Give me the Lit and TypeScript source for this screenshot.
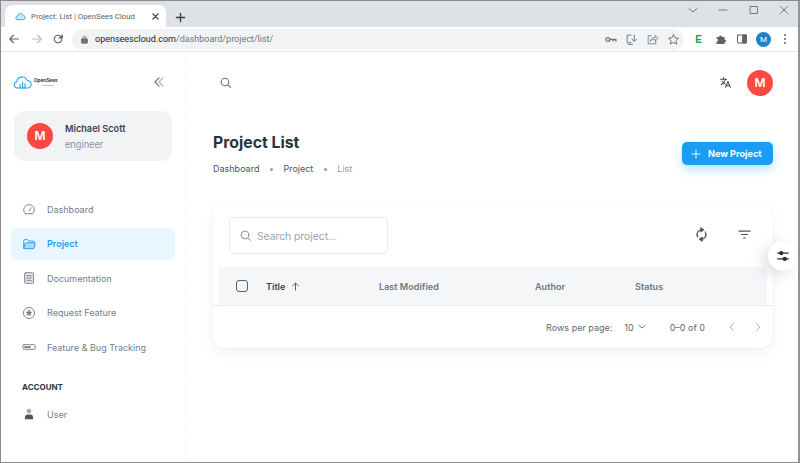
import { LitElement, css, html, svg } from "lit";
import { customElement } from "lit/decorators.js";

const icon = (size: number, body: unknown, sw = 2, view = 24) => html`<svg
  width=${size}
  height=${size}
  viewBox="0 0 ${view} ${view}"
  fill="none"
  stroke="currentColor"
  stroke-width=${sw}
  stroke-linecap="round"
  stroke-linejoin="round"
>${body}</svg>`;

const searchPath = svg`<circle cx="11" cy="11" r="7"></circle><path d="M16.500 16.500 21 21"></path>`;

const navItems = [
  {
    label: "Dashboard",
    icon: svg`<path d="M6 20h12c2-1 3-3.500 3-6.500C21 8 17 4.500 12 4.500S3 8 3 13.500C3 16.500 4 19 6 20Z"></path><path d="m12 15 4-5"></path>`,
  },
  {
    label: "Project",
    active: true,
    icon: svg`<path d="M3 19V6a1.500 1.500 0 0 1 1.500-1.500h5L12 7h7.500A1.500 1.500 0 0 1 21 8.500V10"></path><path d="M3 19a1.500 1.500 0 0 0 1.500 1H19a2 2 0 0 0 2-1.500l1.500-7a1 1 0 0 0-1-1.500H7a1.500 1.500 0 0 0-1.500 1.200L3 19Z" fill="currentColor" fill-opacity=".3"></path>`,
  },
  {
    label: "Documentation",
    icon: svg`<rect x="4.500" y="3" width="15" height="18" rx="1.500" fill="currentColor" fill-opacity=".18"></rect><path d="M8 8h8M8 12h8M8 16h8"></path>`,
  },
  {
    label: "Request Feature",
    icon: svg`<circle cx="12" cy="12" r="9.500"></circle><path d="m12 7 1.500 3.200 3.500.4-2.600 2.300.7 3.500L12 14.700l-3.100 1.700.7-3.500L7 10.600l3.500-.4L12 7Z" fill="currentColor" stroke-width="1"></path>`,
  },
  {
    label: "Feature & Bug Tracking",
    icon: svg`<rect x="1.500" y="8" width="21" height="8" rx="2"></rect><path d="M5 12h9" stroke-width="3"></path>`,
  },
];

@customElement("app-root")
export class AppRoot extends LitElement {
  static styles = css`
    :host {
      display: block;
      width: 800px;
      height: 463px;
      overflow: hidden;
      font-family: Inter, "Noto Sans", sans-serif;
      color: #212b36;
      background: #fff;
    }
    * {
      box-sizing: border-box;
    }
    svg {
      display: block;
      flex: none;
    }
    .window {
      position: relative;
      height: 463px;
      display: flex;
      flex-direction: column;
      border-left: 1px solid #8b8b8b;
      border-right: 2px solid #8f9499;
      border-bottom: 1px solid #8b8b8b;
      border-top: 1px solid #8b8b8b;
    }

    /* browser chrome */
    .tabstrip {
      height: 26px;
      flex: none;
      background: #dee1e6;
      display: flex;
      align-items: flex-end;
      padding-left: 4px;
      color: #3c4043;
    }
    .tab {
      width: 161px;
      height: 22px;
      background: #fff;
      border-radius: 7px 7px 0 0;
      display: flex;
      align-items: center;
      padding: 0 6px 0 10px;
      font: 7.800px Roboto, sans-serif;
      gap: 5px;
    }
    .tab .name {
      flex: 1;
      white-space: nowrap;
      color: #5a5f64;
    }
    .new-tab {
      margin: 7px 0 1px 9px;
      align-self: center;
    }
    .win-controls {
      margin-left: auto;
      align-self: flex-start;
      display: flex;
      align-items: center;
      gap: 18.500px;
      padding: 3px 8px 0 0;
      color: #50555a;
    }
    .toolbar {
      height: 25px;
      flex: none;
      display: flex;
      align-items: center;
      padding: 0 9px 0 7px;
      color: #5f6368;
      border-bottom: 1px solid #e4e6e8;
    }
    .nav-btns {
      display: flex;
      gap: 11px;
      margin-right: 8px;
    }
    .nav-btns .off {
      color: #b9bcc0;
    }
    .nav-btns .reload {
      margin-left: -2px;
    }
    .omnibox {
      width: 612px;
      height: 21px;
      border-radius: 11px;
      background: #f1f3f4;
      display: flex;
      align-items: center;
      padding: 0 4px 0 8px;
      font: 9px Roboto, sans-serif;
      color: #70757a;
    }
    .omnibox .host {
      color: #202124;
    }
    .omnibox .url {
      margin-left: 6px;
      flex: 1;
      white-space: nowrap;
    }
    .omni-icons {
      display: flex;
      gap: 8px;
    }
    .ext {
      display: flex;
      align-items: center;
      gap: 9px;
      margin-left: 8px;
    }
    .ext .e {
      width: 13px;
      text-align: center;
      font: bold 10px "Liberation Sans", sans-serif;
      color: #1c9a3e;
    }
    .ext .puzzle {
      margin-left: 1px;
    }
    .profile {
      width: 15px;
      height: 15px;
      border-radius: 50%;
      background: #1a84c9;
      color: #fff;
      font: 8px/15px Roboto, sans-serif;
      text-align: center;
      margin-left: -1px;
    }
    .dots {
      display: flex;
      flex-direction: column;
      gap: 2px;
      margin-left: 4px;
    }
    .dots i {
      width: 2px;
      height: 2px;
      border-radius: 50%;
      background: #5f6368;
    }

    /* page */
    .page {
      flex: 1;
      display: flex;
      min-height: 0;
    }
    .sidebar {
      width: 185px;
      flex: none;
      border-right: 1px dashed #f1f3f4;
      padding: 0 10px;
      display: flex;
      flex-direction: column;
    }
    .side-head {
      height: 59px;
      flex: none;
      display: flex;
      align-items: center;
      justify-content: space-between;
      padding: 1px 9px 0 2px;
      color: #637381;
    }
    .logo {
      display: flex;
      align-items: center;
      gap: 1px;
      margin-top: 2px;
      color: #2aa2e8;
    }
    .logo-text {
      width: 27px;
      margin-top: -2px;
    }
    .logo-text b {
      display: block;
      font: 600 5.200px/5px Roboto, sans-serif;
      color: #333;
      white-space: nowrap;
    }
    .logo-text i {
      display: block;
      width: 12px;
      height: 1px;
      margin: 2px auto 0;
      background: #c4c7ca;
    }
    .user-card {
      margin: 0 3px;
      height: 50px;
      border-radius: 10px;
      background: #f2f3f5;
      display: flex;
      align-items: center;
      padding-left: 13px;
      gap: 12px;
    }
    .avatar {
      width: 26px;
      height: 26px;
      border-radius: 50%;
      background: #ff4842;
      color: #fff;
      font-weight: 600;
      font-size: 12px;
      line-height: 26px;
      text-align: center;
      flex: none;
    }
    .user-text {
      padding-top: 1px;
    }
    .user-name {
      font-size: 9.200px;
      font-weight: 600;
      color: #3a4350;
      line-height: 13px;
    }
    .user-role {
      font-size: 9.200px;
      color: #8a94a0;
      margin-top: 3px;
      line-height: 13px;
    }
    nav {
      margin-top: 32px;
      display: flex;
      flex-direction: column;
      gap: 2.500px;
    }
    .nav-item {
      height: 32px;
      border-radius: 6px;
      display: flex;
      align-items: center;
      padding-left: 11px;
      gap: 11px;
      font-size: 9px;
      color: #737e8a;
    }
    .nav-item.active {
      background: #e9f6ff;
      color: #1f9bf0;
      font-weight: 600;
    }
    .section {
      margin: 18px 0 0 11px;
      font-size: 8px;
      font-weight: 700;
      color: #2d3743;
      line-height: 12px;
    }
    .nav-item.user {
      margin-top: 5px;
    }

    .main {
      flex: 1;
      min-width: 0;
      padding: 0 25px 0 27px;
      display: flex;
      flex-direction: column;
    }
    .topbar {
      height: 61px;
      flex: none;
      display: flex;
      align-items: center;
      justify-content: space-between;
      padding: 0 0 0 6px;
      color: #637381;
    }
    .top-right {
      display: flex;
      align-items: center;
      gap: 15px;
      color: #3a4350;
    }
    .page-head {
      height: 91px;
      flex: none;
      display: flex;
      align-items: flex-start;
      justify-content: space-between;
    }
    h1 {
      margin: 18px 0 0;
      font-size: 15.800px;
      line-height: 24px;
      font-weight: 700;
      color: #2a3340;
    }
    .crumbs {
      margin-top: 7px;
      display: flex;
      align-items: center;
      gap: 10.500px;
      font-size: 9px;
      line-height: 14px;
      color: #4b5560;
    }
    .crumbs i {
      width: 3px;
      height: 3px;
      border-radius: 50%;
      background: #919eab;
    }
    .crumbs .last {
      color: #919eab;
    }
    .btn {
      margin-top: 29px;
      width: 91px;
      height: 23px;
      border-radius: 5px;
      background: #1b9cf5;
      color: #fff;
      font-size: 9.100px;
      font-weight: 700;
      display: flex;
      align-items: center;
      padding-left: 8px;
      gap: 6px;
      box-shadow: 0 5px 10px rgba(27, 156, 245, 0.28);
    }
    .card {
      height: 144px;
      flex: none;
      border-radius: 12px;
      background: #fff;
      box-shadow: 0 0 2px rgba(145, 158, 171, 0.2),
        0 6px 14px -2px rgba(145, 158, 171, 0.14);
      display: flex;
      flex-direction: column;
    }
    .filters {
      height: 63px;
      flex: none;
      display: flex;
      align-items: flex-start;
      padding: 13px 21.500px 0 16px;
      color: #4b5663;
    }
    .search {
      width: 159px;
      height: 37px;
      border: 1px solid #e7eaed;
      border-radius: 5px;
      display: flex;
      align-items: center;
      gap: 5px;
      padding-left: 9px;
      font-size: 10.300px;
      color: #9aa5b1;
    }
    .search svg {
      color: #7d8894;
    }
    .tools {
      margin-left: auto;
      margin-top: 10px;
      display: flex;
      align-items: center;
      gap: 28px;
    }
    .thead-wrap {
      height: 39px;
      flex: none;
      padding: 0 6px 0 5px;
      border-bottom: 1px solid #e9ecef;
    }
    .thead {
      height: 38px;
      background: #f4f6f8;
      border-radius: 4px 4px 0 0;
      display: grid;
      grid-template-columns: 48px 113px 156px 100px 1fr;
      align-items: center;
      font-size: 9.100px;
      font-weight: 600;
      color: #6d7884;
    }
    .thead .check {
      margin-left: 18px;
      width: 12px;
      height: 12px;
      border: 1.500px solid #58646f;
      border-radius: 3px;
    }
    .thead .title {
      display: flex;
      align-items: center;
      gap: 5px;
      color: #3a4350;
    }
    .pager {
      flex: 1;
      display: flex;
      align-items: center;
      justify-content: flex-end;
      padding-right: 9px;
      font-size: 9px;
      color: #5d6875;
    }
    .rows {
      display: flex;
      align-items: center;
      gap: 2px;
      margin: 0 22px 0 12px;
    }
    .arrows {
      display: flex;
      gap: 14px;
      margin-left: 21px;
      color: #a9b3bd;
    }
    .settings {
      position: absolute;
      right: 0;
      top: 240px;
      width: 30px;
      height: 30px;
      border-radius: 50%;
      background: #fff;
      box-shadow: -6px 4px 14px rgba(145, 158, 171, 0.3);
      display: flex;
      align-items: center;
      justify-content: center;
      color: #212b36;
    }
  `;

  render() {
    return html`
      <div class="window">
        <div class="tabstrip">
          <div class="tab">
            ${icon(
              11,
              svg`<path d="M6 19a4 4 0 0 1-.5-8A6.500 6.500 0 0 1 18 9.500 4.800 4.800 0 0 1 18 19H6Z" fill="#cdeafc" stroke="#3fa9e8"></path>`
            )}
            <span class="name">Project: List | OpenSees Cloud</span>
            ${icon(9, svg`<path d="M5 5 19 19M19 5 5 19"></path>`, 3.500)}
          </div>
          <div class="new-tab">${icon(11, svg`<path d="M12 3v18M3 12h18"></path>`, 3)}</div>
          <div class="win-controls">
            ${icon(12, svg`<path d="m4 9 8 7 8-7"></path>`, 1.500)}
            ${icon(12, svg`<path d="M4 12h16"></path>`, 1.500)}
            ${icon(12, svg`<rect x="5" y="5" width="14" height="14"></rect>`, 1.500)}
            ${icon(12, svg`<path d="m5 5 14 14M19 5 5 19"></path>`, 1.500)}
          </div>
        </div>
        <div class="toolbar">
          <div class="nav-btns">
            ${icon(12, svg`<path d="M21 12H4M11 4.500 3.500 12l7.500 7.500"></path>`, 2.200)}
            <span class="off">${icon(12, svg`<path d="M3 12h17M13 4.500l7.500 7.500-7.500 7.500"></path>`, 2.200)}</span>
            <span class="reload">${icon(12, svg`<path d="M19.500 12a7.500 7.500 0 1 1-2.200-5.300L20 9.500"></path><path d="M20.500 3.500v6.500H14" fill="currentColor"></path>`, 2.200)}</span>
          </div>
          <div class="omnibox">
            ${icon(
              9,
              svg`<rect x="4" y="10" width="16" height="12" rx="2" fill="currentColor"></rect><path d="M8 10V7a4 4 0 0 1 8 0v3"></path>`,
              2.500
            )}
            <span class="url"><span class="host">openseescloud.com</span>/dashboard/project/list/</span>
            <div class="omni-icons">
              ${icon(13, svg`<circle cx="7" cy="12" r="3.500"></circle><path d="M10.500 12H22v3M17 12v2.500"></path>`, 2.400)}
              ${icon(13, svg`<path d="M11 4H4v14h7M6 21h8M17 4v11M13 11.500l4 4 4-4"></path>`, 1.800)}
              ${icon(13, svg`<path d="M10 5H4v15h14v-5"></path><path d="M8 15c1-5 5-7 9-7V4.500L22 10l-5 5v-3.500c-4 0-7 1-9 3.500Z"></path>`, 1.500)}
              ${icon(13, svg`<path d="m12 3 2.800 5.900 6.400.8-4.700 4.400 1.200 6.400-5.700-3.100-5.700 3.100 1.200-6.400L2.800 9.700l6.400-.8L12 3Z"></path>`, 1.800)}
            </div>
          </div>
          <div class="ext">
            <span class="e">E</span>
            <span class="puzzle">${icon(
              12,
              svg`<path d="M3 8h5a3 3 0 0 1 6 0h5v5a3 3 0 0 1 0 6v3H3v-5a3 3 0 0 0 0-6V8Z" fill="currentColor" stroke="none"></path>`
            )}</span>
            ${icon(
              12,
              svg`<rect x="3" y="4" width="18" height="16" rx="1"></rect><rect x="14" y="4" width="7" height="16" fill="currentColor"></rect>`
            )}
            <div class="profile">M</div>
            <div class="dots"><i></i><i></i><i></i></div>
          </div>
        </div>

        <div class="page">
          <aside class="sidebar">
            <div class="side-head">
              <div class="logo">
                ${icon(
                  20,
                  svg`<path d="M5 18a3.800 3.800 0 0 1-.5-7.500A6.500 6.500 0 0 1 17 9a4.600 4.600 0 0 1 1.500 9H5Z"></path><path d="M8.500 18v-4M11.500 18v-7M14.500 18v-5" stroke-width="1.500"></path>`,
                  1.300
                )}
                <div class="logo-text"><b>OpenSees</b><i></i></div>
              </div>
              ${icon(
                14,
                svg`<path d="M12 5 5 12l7 7"></path><path d="m19 5-7 7 7 7" stroke="#a9b3bd"></path>`,
                2
              )}
            </div>
            <div class="user-card">
              <div class="avatar">M</div>
              <div class="user-text">
                <div class="user-name">Michael Scott</div>
                <div class="user-role">engineer</div>
              </div>
            </div>
            <nav>
              ${navItems.map(
                (item) => html`<div class="nav-item ${item.active ? "active" : ""}">
                  ${icon(14, item.icon, 1.600)}<span>${item.label}</span>
                </div>`
              )}
            </nav>
            <div class="section">ACCOUNT</div>
            <div class="nav-item user">
              ${icon(
                14,
                svg`<circle cx="12" cy="7" r="4" fill="#a3acb6" stroke="none"></circle><path d="M5 21v-3a5 5 0 0 1 5-5h4a5 5 0 0 1 5 5v3H5Z" fill="#4b5663" stroke="none"></path>`
              )}
              <span>User</span>
            </div>
          </aside>

          <main class="main">
            <div class="topbar">
              ${icon(13, searchPath, 2)}
              <div class="top-right">
                ${icon(
                  13,
                  svg`<path d="M3 6h11M8.500 3v3M12 6c-1 4-4 8-8 10M6 9.500c1.500 3 3.500 4.500 6 5.500M12 21l4.500-11 4.500 11M13.500 18h6"></path>`,
                  1.900
                )}
                <div class="avatar">M</div>
              </div>
            </div>
            <div class="page-head">
              <div>
                <h1>Project List</h1>
                <div class="crumbs">
                  <span>Dashboard</span><i></i><span>Project</span><i></i>
                  <span class="last">List</span>
                </div>
              </div>
              <div class="btn">
                ${icon(12, svg`<path d="M12 4v16M4 12h16"></path>`, 1.800)}<span>New Project</span>
              </div>
            </div>
            <section class="card">
              <div class="filters">
                <div class="search">
                  ${icon(13, searchPath, 1.800)}<span>Search project...</span>
                </div>
                <div class="tools">
                  ${icon(
                    15,
                    svg`<path d="M6 16a7.500 7.500 0 0 1 7-11.500"></path><path d="M18 8a7.500 7.500 0 0 1-7 11.500"></path><path d="M11 1.500 15 4.500l-4 3ZM13 22.500 9 19.500l4-3Z" fill="currentColor"></path>`
                  )}
                  ${icon(15, svg`<path d="M3 6.500h18M7 12h10M10.500 17.500h3"></path>`, 1.800)}
                </div>
              </div>
              <div class="thead-wrap">
                <div class="thead">
                  <div class="check"></div>
                  <div class="title">
                    <span>Title</span>${icon(11, svg`<path d="M12 20V5M6 10.500 12 4.500l6 6"></path>`, 1.800)}
                  </div>
                  <div>Last Modified</div>
                  <div>Author</div>
                  <div>Status</div>
                </div>
              </div>
              <div class="pager">
                <span>Rows per page:</span>
                <div class="rows">
                  <span>10</span>${icon(12, svg`<path d="m6 9 6 5 6-5"></path>`, 1.800)}
                </div>
                <span>0–0 of 0</span>
                <div class="arrows">
                  ${icon(12, svg`<path d="m15 5-7 7 7 7"></path>`, 2)}
                  ${icon(12, svg`<path d="m9 5 7 7-7 7"></path>`, 2)}
                </div>
              </div>
            </section>
          </main>
        </div>

        <div class="settings">
          ${icon(
            14,
            svg`<path d="M3 7h18M3 17h18"></path><circle cx="9" cy="7" r="2.500" fill="currentColor"></circle><circle cx="15" cy="17" r="2.500" fill="currentColor"></circle>`,
            2.200
          )}
        </div>
      </div>
    `;
  }
}

declare global {
  interface HTMLElementTagNameMap {
    "app-root": AppRoot;
  }
}
